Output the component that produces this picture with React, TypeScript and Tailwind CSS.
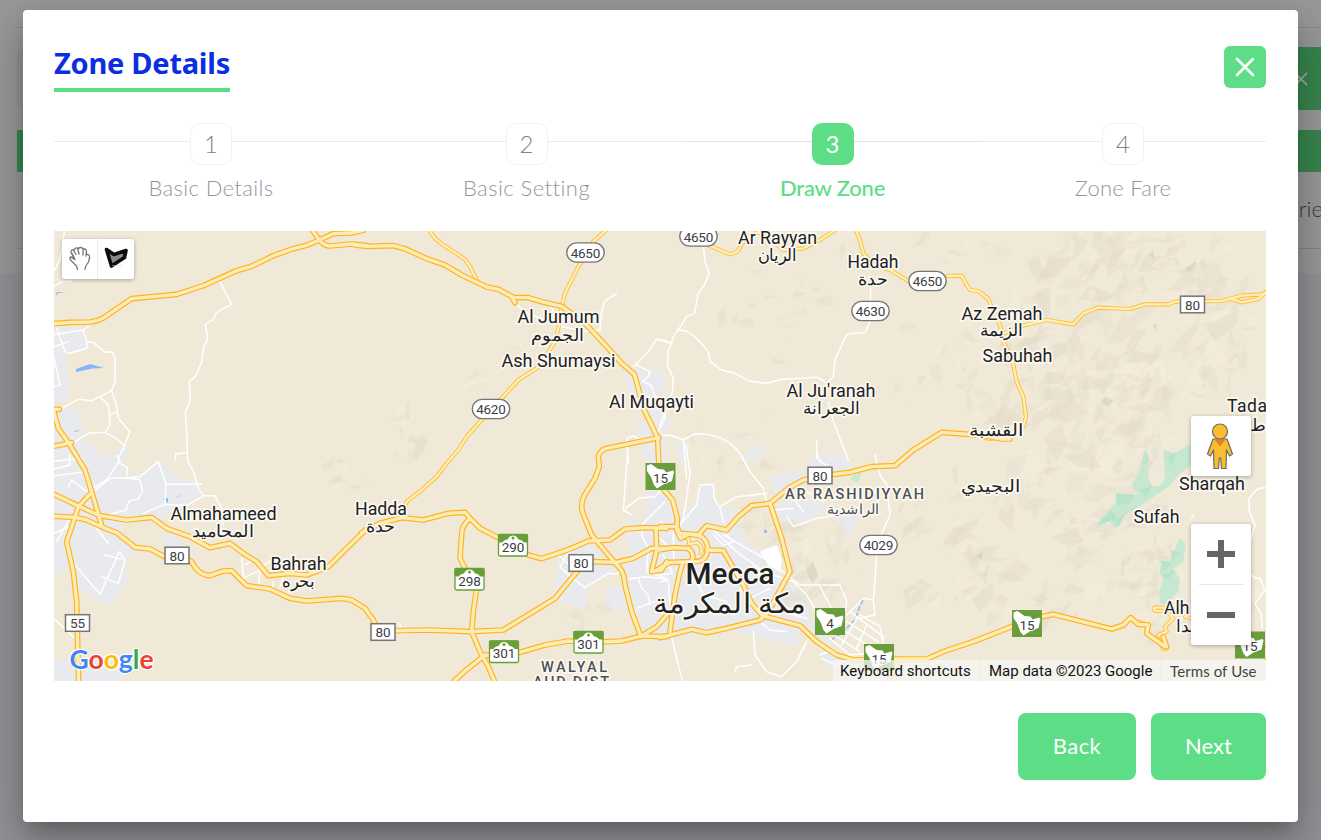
import React from "react";

type Piece = [col: number, row: number, d: string];

/* The map is split in sheets, 305 x 230 units each, drawn at three times their size. */
const sheet = (c: number, r: number) => `translate(${50 + 305 * c} ${225 + 230 * r}) scale(0.33333)`;

const HIGHWAYS: Piece[] = [
  [0, 0, "M-10 298 L60 292 L120 291 Q140 290 158 280 L245 221 L380 208 L460 182 L560 137 L605 124 L670 92 L730 71 L770 61 L808 45 L850 26 L905 24 L940 16"],
  [0, 0, "M780 5 L808 45 Q822 63 840 63 L905 57 L950 62"],
  [1, 0, "M0 60 L35 64 L115 62 L150 71 L215 101 L270 120 L320 150 L395 186 L430 193 L475 217 L520 218 L560 230 L620 244 L690 295 L760 370 L800 415 L838 448 L850 490 L865 550 L885 590 L908 638 L912 730"],
  [1, 0, "M470 215 L480 233"],
  [0, 0, "M-5 553 L28 553 M10 555 L25 610 L60 660 L105 735 L125 800 L155 902"],
  [0, 0, "M5 665 L65 653"],
  [1, 0, "M912 638 L755 670 Q735 675 730 695 L733 725 L720 760 L695 800 Q675 830 682 860 L690 880 L710 930 L760 990 L795 1030 Q808 1045 810 1080 L830 1160 L858 1235"],
  [0, 1, "M-5 110 L90 155 L150 182 L230 195 L305 187 L350 220 L420 245 L480 278 L540 265 L580 295 L620 320 L655 362 L720 355 L770 360 L835 335 L880 290 L945 226"],
  [1, 1, "M20 233 L75 205 L140 188 L205 195 L280 175 L330 172 L350 195 L375 220 L430 248 L520 300 L560 311 L640 284 L700 258 L765 255 L810 222 L870 218 L935 220"],
  [0, 1, "M-5 183 L75 187 L110 195 L165 220 L200 233 L255 277 L300 282 L345 305 L400 305 L425 320 Q445 360 480 362 L520 348 L545 347 L590 392 L660 402 L720 430 L770 438 L875 430 L905 435 L945 460 L970 495 L985 528 L1140 525 L1260 530 L1360 525 L1515 430 L1585 345"],
  [1, 1, "M670 345 L715 320 L785 322 L835 310 L890 280 L935 280"],
  [0, 1, "M125 112 L85 155 L75 187 L50 260 L70 350 L80 440 L82 530 L86 690"],
  [1, 1, "M345 190 Q318 215 320 240 L315 310 L335 350 L365 400 L355 470 L350 530 L375 590 L400 635 L425 695"],
  [1, 1, "M285 690 L330 648 L390 600 L450 605 L570 570 L640 558 L700 563 L800 558 L860 543 L935 545"],
  [2, 0, "M1050 642 L1025 642 L990 635 L930 628 L845 622 L760 675 L725 705 L705 722 L635 725 L570 742 L490 752 L430 765 L385 790 L330 835 L275 842 L235 875 L200 915 L140 902 L115 930 L60 925 L50 905 L0 905"],
  [2, 1, "M0 548 L95 523 L140 533 L200 520 L300 495 L325 470 L390 350 L365 250 L330 145"],
  [2, 1, "M318 485 L420 512 L470 560 L530 600 L580 615 L700 612 L800 612 L850 590 L940 560 L1055 515 L1145 485 L1180 478 L1355 522 L1390 510 L1412 488 L1435 508 L1465 510 L1460 535 L1515 575"],
  [2, 1, "M0 88 L8 100 L38 135 L52 190 L50 225 L62 250 L85 238 Q140 235 143 280 Q142 322 100 320 L30 322 L-10 345"],
  [2, 1, "M-5 285 L40 278 L85 280 Q105 295 95 318 M140 285 L190 287 L215 330 L250 390 L275 445 L310 485"],
  [2, 1, "M68 325 L60 350 L45 420 L30 530"],
  [1, 1, "M860 543 L905 515 L940 475 M903 225 L905 285 L890 350 L920 345 L935 320"],
  [3, 1, "M595 545 L605 575"],
];

const ROADS: Piece[] = [
  [1, 0, "M215 5 L240 40 L262 58 L330 103 L345 125 L365 165"],
  [1, 0, "M765 5 L715 50 L670 125 L630 205 L620 246 L610 310 L600 350 L575 390 L545 430 L490 465 L435 525 L380 585 L335 635 L310 675 L275 715 L245 755 L200 795 L155 830 L140 875"],
  [2, 0, "M148 62 L210 88 L232 80 L255 42 L295 20 L340 50 L370 75 L430 70 L480 45 L530 12"],
  [2, 0, "M583 5 L600 45 L610 85 L640 118 L690 135 L745 168 M862 153 L905 152 L920 180 L930 195 L955 198 L985 222 L1005 270 L1020 300 L1030 350 L1060 420 L1070 470 L1090 515 L1098 575 L1090 605 L1055 625 L990 642 L940 630"],
  [3, 0, "M115 325 L180 300 L245 285 L325 298 L355 265 L400 248 L495 252 L540 238 L610 238 L630 230 L770 228 L830 212 L890 208 L915 200"],
  [3, 0, "M800 222 L830 232 L880 222 L905 200"],
  [3, 1, "M590 468 Q560 470 568 458 L595 458 L625 490 L600 515 L605 530 L580 540 L600 555 L605 580 Q595 590 590 570 M520 500 L550 510 M660 485 L680 490 M900 582 L905 610"],
  [2, 1, "M720 612 L680 690 M60 245 L85 250 L88 268 L110 262 Q130 275 122 295"],
];

const STREETS: Piece[] = [
  [0, 0, "M45 10 L30 100 L15 135 L0 140 M0 190 L35 170 L65 168 M510 170 L545 238 L500 262 L490 282 L466 298 L473 340 L460 370 L455 412 L438 452 L418 470 L421 527 L406 562 L410 620 L413 710 L430 740 L445 790 L460 812 L495 812 L515 850 L520 900"],
  [0, 0, "M0 370 L55 350 M0 330 L100 315 L115 305 M20 310 L45 380 L60 385 L110 370 L110 345 L98 315 M12 400 L30 480 L10 485 M110 350 L130 352 L165 382 L185 380 L195 400 L195 470 L185 497 L150 515 L125 527 L85 523 L30 553 M150 515 L175 540 L178 570 L180 600 L165 622 L115 625 L60 660 M178 570 L200 560 M185 497 L200 540 L205 580 L240 620 L220 670 L205 700 M165 622 L200 640 L225 665 M375 705 L378 686 L412 683"],
  [0, 1, "M0 65 L105 50 M0 20 L95 10 M0 45 L60 30 L58 0 M200 0 L210 25 L232 38 L230 68 L270 75 L278 108 L265 132 L237 138 L228 165 L175 180 M230 68 L180 70 L130 110 M210 15 L170 75 L110 110 L65 75 L55 95 M232 70 L270 65 L325 20 L348 88 L455 88 M348 88 L345 148 L280 175 M345 148 L410 152 L458 125 M75 330 L150 418 L208 290 L225 315 L205 385 L155 365 M120 195 L175 265 M165 300 L215 312 M0 240 L60 215 M60 190 L20 260 M0 480 L75 550"],
  [0, 1, "M575 310 L580 370 L630 345 L625 400 M585 330 L612 315 M640 330 L660 320 M670 380 L665 410 M700 365 L690 395"],
  [1, 0, "M785 205 L748 230 L740 260 L735 315 L690 318 L620 305 L590 250 M480 233 L510 262 L570 285 M835 425 L880 380 L905 342 L935 348 M845 420 L885 440 L880 455 L862 470 L888 480 L900 512 L925 530 L930 580 L908 620 M820 715 L815 640 L835 632 L850 642 L905 640"],
  [1, 1, "M818 0 L815 30 L805 165 L830 180 M812 160 L850 130 L900 125 L935 90 M930 140 L865 205 L860 240 L880 280 L875 350 L935 370 M822 372 L870 365 L935 372 M850 370 L860 400 L880 420 L885 450 M690 398 L630 350 L615 335 L635 300 L660 280 M690 398 L760 355 L785 358 L800 340 M610 300 L660 345 M845 460 L900 440 M135 505 L138 535 M920 200 L900 260 L930 290"],
  [2, 0, "M130 62 L135 110 L147 145 L133 180 L115 205 L103 265 L80 275 L55 315 L42 330 L25 380 L22 420 L40 460 L37 500 L20 550 L0 600 M0 345 L35 355 M52 315 L80 318 L110 340 L145 380 L150 410 L185 435 L225 445 L265 467 L320 475 L365 463 L475 457 L500 475 L520 455 L525 405 L560 328 L615 322 L630 290 L632 190 M505 530 L520 590 L565 705 M0 632 L30 630 L70 645 L100 628 Q200 620 250 700 M470 645 L470 700 M70 640 L80 760"],
  [2, 1, "M78 -30 L90 55 L78 140 L68 200 M245 5 L270 50 L310 100 L320 140 M60 210 L110 150 L120 90 L160 88 L163 130 L180 160 L190 200 M180 155 L230 125 L320 115 M40 230 L42 330 M160 225 L230 290 L310 350 L400 380 L440 420 L485 495 M190 240 L260 280 L330 320 L420 390 L540 390 L560 440 L555 470 M480 395 L520 470 M200 240 L220 260 L190 270 L160 240 M0 380 L25 375 L30 460 M0 250 L38 290 M10 300 L35 350 M0 360 L38 355 M90 340 L130 420 L200 440 M240 400 L270 430 L330 400 M280 530 L285 600 L320 650 L365 665 L410 620 L440 560 M225 650 L230 635 L275 630 M35 545 L50 610 L70 690 M300 500 L330 525 L380 530 M440 490 L400 480 L350 445"],
  [2, 1, "M470 -5 L480 20 L500 30 M645 0 L660 60 L680 90 L690 180 L665 235 L650 300 L640 440 M560 480 L610 430 L640 435 L645 480 L600 490 M570 470 L670 545 L665 590 L570 600 L510 550 M600 480 L660 515 L668 560 M560 500 L655 560 M540 520 L640 580 M530 545 L600 590 M590 490 L545 570 M620 510 L590 580 M485 610 L530 630 L560 615 M480 600 L520 585 M380 185 L400 215 L470 190 L540 180 M400 130 L430 170 M340 165 L400 160 M440 110 L490 140"],
  [3, 1, "M905 98 L880 100 L852 130 L853 170 L870 210 L855 260 M855 355 L870 370 L885 370 L900 405 L870 445 L888 475 L892 520 M680 190 L686 182 M640 495 L665 480 L680 490 M840 590 L810 625 L780 640 L750 665"],
];

const TOWNS: Piece[] = [
  [0, 0, "M12 300 L45 305 L100 312 L113 350 L110 368 L60 388 L45 390 L60 480 L45 530 L12 530Z M12 550 L75 545 L100 610 L100 655 L135 665 L145 705 L12 715Z M190 700 L205 670 L235 660 L220 715Z"],
  [0, 1, "M12 0 L200 0 L232 60 L290 50 L330 15 L375 65 L440 80 L458 120 L395 155 L360 165 L330 200 L270 180 L220 185 L215 235 L250 265 L300 300 L240 300 L220 345 L240 350 L230 380 L180 455 L70 390 L55 330 L15 365 L12 360Z M330 245 L370 235 L395 270 L425 275 L405 300 L360 290Z M12 615 L90 612 L230 640 L215 680 L12 690Z"],
  [1, 0, "M805 435 L860 430 L925 440 L935 470 L900 520 L930 590 L935 705 L865 690 L845 600 L885 585 L850 540 L825 500Z"],
  [1, 1, "M610 320 L660 280 L700 265 L800 360 L790 345 L760 360 L700 395 L690 460 L610 440 L595 410Z M755 390 L815 400 L820 470 L750 455Z M870 0 L900 0 L935 30 L935 575 L870 530 L830 440 L810 340 L830 310 L815 260 L820 180 L860 210 L880 140 L870 110 L905 100Z"],
  [2, 0, "M0 430 L12 435 L0 470Z M0 515 L22 500 L18 560 L35 600 L0 615Z M268 658 L320 670 L300 705 L250 705Z M510 690 L550 685 L560 705 L515 705Z M50 650 L80 655 L80 710 L60 710Z"],
  [2, 1, "M0 95 L30 140 L60 180 L110 140 L120 90 L160 88 L170 150 L250 170 L280 165 L240 200 L250 250 L300 290 L350 350 L420 400 L450 480 L410 545 L410 575 L280 540 L190 525 L95 540 L0 560Z M330 60 L420 50 L450 75 L350 150Z M460 0 L560 0 L575 50 L500 60 L440 40Z M345 160 L430 120 L500 160 L470 190 L385 215Z M510 180 L610 160 L570 250 L545 215Z M480 580 L570 615 L560 650 L500 640Z M440 480 L520 560 L500 580 L440 530Z"],
];

const PARKS: Piece[] = [
  [3, 0, "M548 670 L545 700 L500 780 L520 810 L455 805 L450 835 L400 890 L395 905 L430 890 L455 910 L480 870 L530 840 L610 785 L640 750 L720 690 L720 645 L680 655 L630 685 L595 675 L600 760 Q590 790 560 782 L550 755Z"],
  [3, 1, "M645 250 L662 265 L655 320 L625 340 L645 375 L640 410 L600 450 L585 445 L582 410 L595 375 L582 350 L590 320 L615 315Z"],
  [2, 1, "M580 60 L605 50 L595 82 L572 75Z"],
];

/* Faceted relief, scattered over the hilly parts: [cx, cy, rx, ry, count, size] */
const HILLS: number[][] = [
  [1130, 330, 130, 90, 200, 17],
  [1080, 420, 100, 75, 110, 17],
  [1130, 248, 120, 18, 34, 13],
  [1030, 560, 70, 75, 70, 16],
  [1125, 545, 60, 65, 60, 14],
  [940, 540, 45, 70, 40, 14],
  [765, 310, 60, 55, 26, 9],
  [940, 380, 45, 80, 28, 10],
  [740, 440, 55, 30, 16, 9],
  [810, 560, 42, 45, 45, 13],
  [755, 522, 25, 17, 16, 10],
  [412, 440, 18, 32, 24, 11],
  [345, 475, 22, 28, 14, 9],
  [475, 375, 14, 20, 6, 11],
  [520, 330, 10, 22, 4, 8],
  [590, 610, 20, 30, 7, 9],
  [1180, 590, 80, 50, 45, 12],
  [860, 250, 150, 18, 16, 10],
];

function makeFacets() {
  let s = 4711;
  const rnd = () => {
    s = (s * 1103515245 + 12345) % 2147483648;
    return s / 2147483648;
  };
  const out: { d: string; tone: string; o: number }[] = [];
  HILLS.forEach(([cx, cy, rx, ry, n, size]) => {
    for (let i = 0; i < n; i++) {
      const a = rnd() * 6.283;
      const q = Math.sqrt(rnd());
      const x = cx + Math.cos(a) * rx * q;
      const y = cy + Math.sin(a) * ry * q;
      const l = size * (0.35 + rnd() * 0.9);
      const w = l * (0.25 + rnd() * 0.5);
      const t = -0.8 + (rnd() - 0.5) * 2.2;
      const m = (rnd() - 0.5) * 1.4;
      const c = Math.cos(t);
      const k = Math.sin(t);
      const p = (u: number, v: number) => `${(x + u * c - v * k).toFixed(1)} ${(y + u * k + v * c).toFixed(1)}`;
      out.push({
        d: `M${p(-l, 0)} L${p(l * m, -w)} L${p(l, w * 0.3)} L${p(-l * m * 0.6, w * 0.7)}Z`,
        tone: rnd() < 0.55 ? "#e4dbc8" : "#f5edda",
        o: 0.25 + rnd() * 0.3,
      });
    }
  });
  return out;
}
const FACETS = makeFacets();

const draw = (list: Piece[], props: React.SVGProps<SVGPathElement>) =>
  list.map(([c, r, d], i) => <path key={i} transform={sheet(c, r)} d={d} {...props} />);

type Label = { t: string; x: number; y: number; w: number; s?: number; b?: number; fill?: string };

const LABELS: Label[] = [
  { t: "Ar Rayyan", x: 777.5, y: 243.5, w: 79 },
  { t: "Hadah", x: 873, y: 267.5, w: 51 },
  { t: "Az Zemah", x: 1002, y: 319.5, w: 81 },
  { t: "Sabuhah", x: 1017.5, y: 362, w: 70 },
  { t: "Al Jumum", x: 558.5, y: 323, w: 82 },
  { t: "Ash Shumaysi", x: 558.5, y: 366.5, w: 114 },
  { t: "Al Muqayti", x: 651.5, y: 407.5, w: 85 },
  { t: "Al Ju'ranah", x: 831, y: 396.5, w: 89 },
  { t: "Almahameed", x: 223.5, y: 519.5, w: 106 },
  { t: "Bahrah", x: 298.5, y: 569.5, w: 56 },
  { t: "Hadda", x: 381, y: 514.5, w: 52 },
  { t: "Sharqah", x: 1212, y: 490, w: 66 },
  { t: "Sufah", x: 1156.5, y: 522.5, w: 46 },
  { t: "Mecca", x: 730, y: 583.5, w: 89, s: 29.5, b: 500 },
  { t: "AR RASHIDIYYAH", x: 854.5, y: 499, w: 139, s: 14.5, b: 500, fill: "#4d5156" },
  { t: "WALYAL", x: 574, y: 672, w: 66, s: 14.5, b: 500, fill: "#4d5156" },
  { t: "AHD DIST", x: 571, y: 687, w: 76, s: 14.5, b: 500, fill: "#4d5156" },
];

const ARABIC: Label[] = [
  { t: "الريان", x: 777.5, y: 261, w: 39 },
  { t: "حدة", x: 873, y: 285, w: 30 },
  { t: "الزيمة", x: 1001.5, y: 336, w: 43 },
  { t: "الجموم", x: 557.5, y: 340.5, w: 53 },
  { t: "الجعرانة", x: 831, y: 413.5, w: 57 },
  { t: "القشبة", x: 996, y: 435.5, w: 55 },
  { t: "البجيدي", x: 990.5, y: 492, w: 60 },
  { t: "المحاميد", x: 223, y: 537, w: 62 },
  { t: "بحره", x: 298.5, y: 587, w: 33 },
  { t: "حدة", x: 380.5, y: 531.5, w: 30 },
  { t: "مكة المكرمة", x: 729.5, y: 613, w: 153, s: 28 },
  { t: "الراشدية", x: 853, y: 513.5, w: 53, s: 14, fill: "#4d5156" },
];

const PILLS: [number, number, string][] = [
  [585.5, 252.5, "4650"], [698.5, 236.5, "4650"], [927.5, 281, "4650"],
  [870.5, 311, "4630"], [491, 409, "4620"], [878.5, 545, "4029"],
];
const PLATES: [number, number, string][] = [
  [177, 555.5, "80"], [77.5, 623, "55"], [383, 632, "80"], [581, 563, "80"], [820, 475.5, "80"], [1192.5, 304.5, "80"],
];
const CROWNS: [number, number, string][] = [
  [513, 545, "290"], [469.5, 579, "298"], [504, 651.5, "301"], [588.5, 642, "301"],
];
const KINGDOM: [number, number, string][] = [
  [660.5, 476.5, "15"], [830, 621.5, "4"], [1027, 623.5, "15"], [879, 657.5, "15"], [1250, 645, "15"],
];

function ZoneMap() {
  const halo = { stroke: "#fbf8f0", strokeLinejoin: "round" as const, paintOrder: "stroke" as const };
  return (
    <svg viewBox="54 231 1212 450" className="block h-full w-full" fontFamily='Roboto, "Noto Sans", sans-serif'>
      <rect x="54" y="231" width="1212" height="450" fill="#f0e9d8" />
      {draw(TOWNS, { fill: "#e8eaed" })}
      {FACETS.map((f, i) => (
        <path key={i} d={f.d} fill={f.tone} fillOpacity={f.o} />
      ))}
      <g fill="#cfc7b5" fillOpacity="0.5">
        <path d="M1149 255 L1153 250 L1154 259Z M1185 268 L1195 262 L1197 265 L1188 272Z M1100 401 L1106 397 L1114 401 L1107 407Z M1153 325 L1157 323 L1156 332Z M975 557 L983 551 L982 559Z M806 570 L813 562 L818 575 L812 584Z" />
      </g>
      {draw(PARKS, { fill: "#c6e8d0" })}
      <g fill="#addfc3" fillOpacity="0.6">
        <path d="M1097 526 L1112 510 L1119 522 L1110 520Z M1116 493 L1135 495 L1130 503 L1118 505Z M1117 520 L1127 511 L1118 528Z M1145 449 L1150 460 L1140 466Z M1162 575 L1175 570 L1168 580 L1176 584Z M1160 560 L1172 563 L1164 571Z M1170 550 L1180 553 L1172 560Z M1166 457 L1176 452 L1172 466Z M1140 490 L1152 486 L1146 497Z" />
      </g>
      <g fill="#8ab4f8">
        <path d="M76 369 L90 364 L104 368 L92 368.5 L76 372Z M163 499 L168 498 L168 503Z M55 297 L57 292 L66 292 L58 293Z M74 431 L81 430 L75 432Z M174 498 L184 494 L178 497Z" />
        <circle cx="765.500" cy="531.500" r="1.600" />
        <path d="M863 600 L860 606 L855 620 L842 633 L831 640" fill="none" stroke="#8ab4f8" strokeWidth="1.500" strokeDasharray="5 2" />
      </g>
      <g fill="none" strokeLinecap="round" strokeLinejoin="round">
        {draw(STREETS, { stroke: "#ffffff", strokeWidth: 4.5 })}
        <path d="M760 552 L768 548 L777 545 L782 560 L780 572 L768 565Z" fill="#fff" />
        {draw(ROADS, { stroke: "#fbc02d", strokeWidth: 12.5 })}
        {draw(ROADS, { stroke: "#ffeebb", strokeWidth: 7 })}
        {draw(HIGHWAYS, { stroke: "#fbb420", strokeWidth: 17 })}
        {draw(HIGHWAYS, { stroke: "#ffecb5", strokeWidth: 10 })}
      </g>

      {PILLS.map(([x, y, t], i) => (
        <g key={i}>
          <rect x={x - 18.7} y={y - 9.6} width="37.400" height="19.200" rx="9.600" fill="#fff" stroke="#757575" strokeWidth="1.400" />
          <text x={x} y={y + 5} fontSize="13.500" textAnchor="middle" textLength="29.500" fill="#3c4043">{t}</text>
        </g>
      ))}
      {PLATES.map(([x, y, t], i) => (
        <g key={i}>
          <rect x={x - 12} y={y - 8.300} width="24" height="16.600" fill="#fff" stroke="#757575" strokeWidth="1.500" />
          <text x={x} y={y + 5} fontSize="13.500" textAnchor="middle" fill="#3c4043">{t}</text>
        </g>
      ))}
      {CROWNS.map(([x, y, t], i) => (
        <g key={i}>
          <rect x={x - 14.5} y={y - 10.500} width="29" height="21.500" rx="1.500" fill="#fff" stroke="#689f38" strokeWidth="1.300" />
          <rect x={x - 15} y={y - 11} width="30" height="8.500" rx="1" fill="#689f38" />
          <path d={`M${x - 11} ${y - 2} q2 -3.500 5.500 -3.500 q2 -4 5.500 -4 q3.500 0 5.500 4 q3.500 0 5.500 3.500z`} fill="#fff" />
          <circle cx={x} cy={y - 7} r="1.500" fill="#689f38" />
          <text x={x} y={y + 6.500} fontSize="13.500" textAnchor="middle" textLength="22.500" fill="#3c4043">{t}</text>
        </g>
      ))}
      {KINGDOM.map(([x, y, t], i) => (
        <g key={i}>
          <rect x={x - 15} y={y - 13.500} width="30" height="27" fill="#6a9e3c" />
          <path d={`M${x - 13.5} ${y - 11} l4 -1.500 l7 5 l6 0.500 l2 3 l7 -2 l1 1.500 l-2 9 l-8 3 l-7 4.500 l-3 -3.500 l-3 -8 l-4 -6z`} fill="#fff" />
          <text x={x} y={y + 6} fontSize="13.500" textAnchor="middle" fill="#3c4043" stroke="#fff" strokeWidth="2" paintOrder="stroke">{t}</text>
        </g>
      ))}

      {LABELS.map((l, i) => (
        <text key={i} x={l.x} y={l.y} fontSize={l.s ?? 17.5} fontWeight={l.b ?? 400} textAnchor="middle"
          textLength={l.w} lengthAdjust={l.s === 14.5 ? "spacing" : "spacingAndGlyphs"} fill={l.fill ?? "#202124"} strokeWidth="3.500" {...halo}>
          {l.t}
        </text>
      ))}
      {ARABIC.map((l, i) => (
        <text key={i} x={l.x} y={l.y} fontSize={l.s ?? 17} textAnchor="middle" textLength={l.w} lengthAdjust="spacingAndGlyphs"
          fill={l.fill ?? "#202124"} strokeWidth="3.500" {...halo}>
          {l.t}
        </text>
      ))}
      <text x="1227" y="412" fontSize="17.500" textLength="40" fill="#202124" strokeWidth="3.500" {...halo}>Tada</text>
      <text x="1250" y="431" fontSize="17" fill="#202124" strokeWidth="3.500" {...halo}>ط</text>
      <text x="1164" y="614" fontSize="17.500" fill="#202124" strokeWidth="3.500" {...halo}>Alh</text>
      <text x="1199" y="632" fontSize="17" textAnchor="end" fill="#202124" strokeWidth="3.500" {...halo}>هدا</text>

      <g fontFamily="Lato, sans-serif" fontWeight="700" fontSize="27" stroke="#fff" strokeWidth="2.500" paintOrder="stroke" strokeLinejoin="round">
        <text x="69.500" y="669" textLength="84" lengthAdjust="spacingAndGlyphs">
          <tspan fill="#4285f4">G</tspan>
          <tspan fill="#ea4335">o</tspan>
          <tspan fill="#fbbc04">o</tspan>
          <tspan fill="#4285f4">g</tspan>
          <tspan fill="#34a853">l</tspan>
          <tspan fill="#ea4335">e</tspan>
        </text>
      </g>
    </svg>
  );
}

function HandIcon() {
  return (
    <svg width="24" height="26" viewBox="0 0 24 26" fill="none" stroke="#757575" strokeWidth="1.300" strokeLinecap="round" strokeLinejoin="round">
      <path d="M9.500 23.500 L8.500 20 L3 14.500 Q0.500 11 3.500 11 L6.500 13.500 L4 8 Q1.500 4.500 5 3.500 L8 8.500 M6.500 4 Q6.500 1.500 9.500 2 L11 8 M10.500 2.500 Q12 0.500 15 2.500 L15 9 M15 3.500 Q18 2 18.500 5 L18 10 M18.500 8.500 Q22 8 21.500 12 L20.500 16 L17.500 20.500 L17 23.500" />
      <path d="M5 10.500 L7 13.500 M3.500 7 L6 11" />
    </svg>
  );
}

function PolygonIcon() {
  return (
    <svg width="24" height="26" viewBox="0 0 24 26">
      <path d="M2.500 3.500 L10 8.500 L22 4.500 L20.500 11.500 L7.500 20Z" fill="#8a8a8a" stroke="#0c0c0c" strokeWidth="3.600" strokeLinejoin="round" />
      <path d="M8 19.500 H18" stroke="#ccc" strokeWidth="0.500" />
    </svg>
  );
}

function Pegman() {
  return (
    <svg width="28" height="48" viewBox="0 0 28 48">
      <g fill="#fbbc2d" stroke="#6b6b6b" strokeWidth="1.200" strokeLinejoin="round">
        <path d="M7 17 H21 L26.500 32 L23.500 34 L20.500 28 L20 46.500 H15.500 L14.700 36 H13.300 L12.500 46.500 H8 L7.500 28 L4.500 34 L1.500 32Z" />
        <circle cx="14" cy="9.500" r="7.500" />
      </g>
      <path d="M8.500 17.500 H19.500 L14 24.500Z" fill="#e07f2c" />
    </svg>
  );
}

const STEPS = [
  { n: 1, label: "Basic Details", cell: "w-[314px]", text: "tracking-[0.36px]" },
  { n: 2, label: "Basic Setting", cell: "w-[317px]", text: "tracking-[0.45px]" },
  { n: 3, label: "Draw Zone", cell: "w-[295px]", text: "tracking-[-0.2px]", active: true },
  { n: 4, label: "Zone Fare", cell: "w-[286px]", text: "tracking-[0.25px]" },
];

function Cross({ size, width }: { size: number; width: number }) {
  return (
    <svg width={size} height={size} viewBox="0 0 20 20" stroke="currentColor" strokeWidth={width} strokeLinecap="round">
      <path d="M2 2 L18 18 M18 2 L2 18" />
    </svg>
  );
}

function Backdrop() {
  return (
    <div className="flex h-full flex-col bg-[#929397]">
      <div className="h-[273px] bg-[#999999]">
        <div className="ml-[17px] h-[28px] border-b border-[#8a8a8a]" />
        <div className="mt-[19px] ml-[17px] flex h-[63px] items-center justify-between rounded-l-lg bg-[#949494]">
          <span />
          <span className="flex h-full w-[60px] items-center justify-end bg-[#38864f] pr-[13px] text-[#aaa]">
            <Cross size={14} width={2.2} />
          </span>
        </div>
        <div className="mt-5 ml-[17px] h-[42px] bg-[#38864f]" />
        <div className="ml-[17px] flex h-[77px] items-center justify-end overflow-hidden border-b border-[#858585] pb-1 font-['Lato'] text-[22px] font-light text-[#343a44]">
          <span className="-mr-[2px]">trie</span>
        </div>
      </div>
    </div>
  );
}

export default function App() {
  return (
    <div className="relative h-[840px] w-[1321px] overflow-hidden font-['Lato',sans-serif]">
      <Backdrop />
      <section className="absolute top-[10px] left-[23px] flex h-[812px] w-[1275px] flex-col rounded bg-white pt-9 pr-8 pl-[31px] shadow-[0_11px_15px_-7px_rgba(0,0,0,0.2),0_24px_38px_3px_rgba(0,0,0,0.14),0_9px_46px_8px_rgba(0,0,0,0.12)]">
        <header className="flex h-[77px] items-start justify-between">
          <h1 className="h-[46px] w-[176px] border-b-4 border-[#5cdd86] font-['Noto_Sans'] text-[29px] leading-[34px] font-bold tracking-[-0.25px] whitespace-nowrap text-[#0b2ee0]">
            Zone Details
          </h1>
          <button aria-label="Close" className="flex size-[42px] items-center justify-center rounded-md bg-[#5cdd86] text-white">
            <Cross size={20} width={2.6} />
          </button>
        </header>

        <ol className="flex h-[108px]">
          {STEPS.map((s) => (
            <li key={s.n} className={`flex flex-col items-center ${s.cell}`}>
              <div className="flex w-full items-center">
                <span className={`mb-[5px] h-px flex-1 ${s.active ? "bg-[#dfe0e1]" : "bg-[#ebebec]"}`} />
                <span
                  className={`flex size-[42px] items-center justify-center rounded-[10px] text-2xl ${
                    s.active ? "bg-[#5cdd86] font-normal text-white" : "border border-[#f1f1f3] bg-white font-light text-[#7d8288]"
                  }`}
                >
                  {s.n}
                </span>
                <span className={`mb-[5px] h-px flex-1 ${s.active ? "bg-[#dfe0e1]" : "bg-[#ebebec]"}`} />
              </div>
              <span
                className={`mt-2 text-center text-[22px] leading-[30px] whitespace-nowrap ${s.text} ${
                  s.active ? "font-medium text-[#5cdd86]" : "font-light text-[#92979e]"
                }`}
              >
                {s.label}
              </span>
            </li>
          ))}
        </ol>

        <div className="relative h-[450px] w-[1212px] overflow-hidden">
          <ZoneMap />
          <div className="absolute top-2 left-2 flex h-10 w-[72px] overflow-hidden rounded-[3px] bg-white shadow-[0_1px_4px_rgba(0,0,0,0.3)]">
            <span className="flex w-9 items-center justify-center border-r border-[#ececec]">
              <HandIcon />
            </span>
            <span className="flex w-9 items-center justify-center">
              <PolygonIcon />
            </span>
          </div>
          <div className="absolute top-[185px] right-[15px] flex size-[60px] items-center justify-center rounded-[3px] bg-white pr-[2px] shadow-[0_1px_4px_rgba(0,0,0,0.3)]">
            <Pegman />
          </div>
          <div className="absolute top-[293px] right-[15px] flex h-[121px] w-[60px] flex-col items-center rounded-[3px] bg-white shadow-[0_1px_4px_rgba(0,0,0,0.3)]">
            <span className="flex h-[60px] items-center justify-center">
              <svg width="28" height="28" viewBox="0 0 28 28" fill="#666">
                <path d="M11 0 h6 v11 h11 v6 h-11 v11 h-6 v-11 h-11 v-6 h11z" />
              </svg>
            </span>
            <span className="h-px w-[45px] bg-[#e6e6e6]" />
            <span className="flex h-[60px] items-center justify-center">
              <span className="h-[6px] w-7 bg-[#666]" />
            </span>
          </div>
          <div className="absolute right-0 bottom-0 flex h-[21px] items-center font-['Roboto'] text-[15px] leading-[22px] whitespace-nowrap text-[#111]">
            <span className="h-[21px] w-[147px] bg-[#f5f5f5]/75 pl-[7px] tracking-[0.03px]">Keyboard shortcuts</span>
            <span className="ml-px h-[21px] w-[180px] bg-[#f5f5f5]/75 pl-[8px]">Map data ©2023 Google</span>
            <span className="ml-px h-[21px] w-[104px] bg-[#f5f5f5]/75 pl-[8px] font-['Lato'] tracking-[0.1px] text-[#444]">Terms of Use</span>
          </div>
        </div>

        <footer className="mt-8 flex justify-end gap-[15px] text-[22px] text-white">
          <button className="h-[67px] w-[118px] rounded-lg bg-[#5cdd86] pb-[2px] tracking-[0.4px]">Back</button>
          <button className="h-[67px] w-[115px] rounded-lg bg-[#5cdd86] pb-[2px]">Next</button>
        </footer>
      </section>
    </div>
  );
}
